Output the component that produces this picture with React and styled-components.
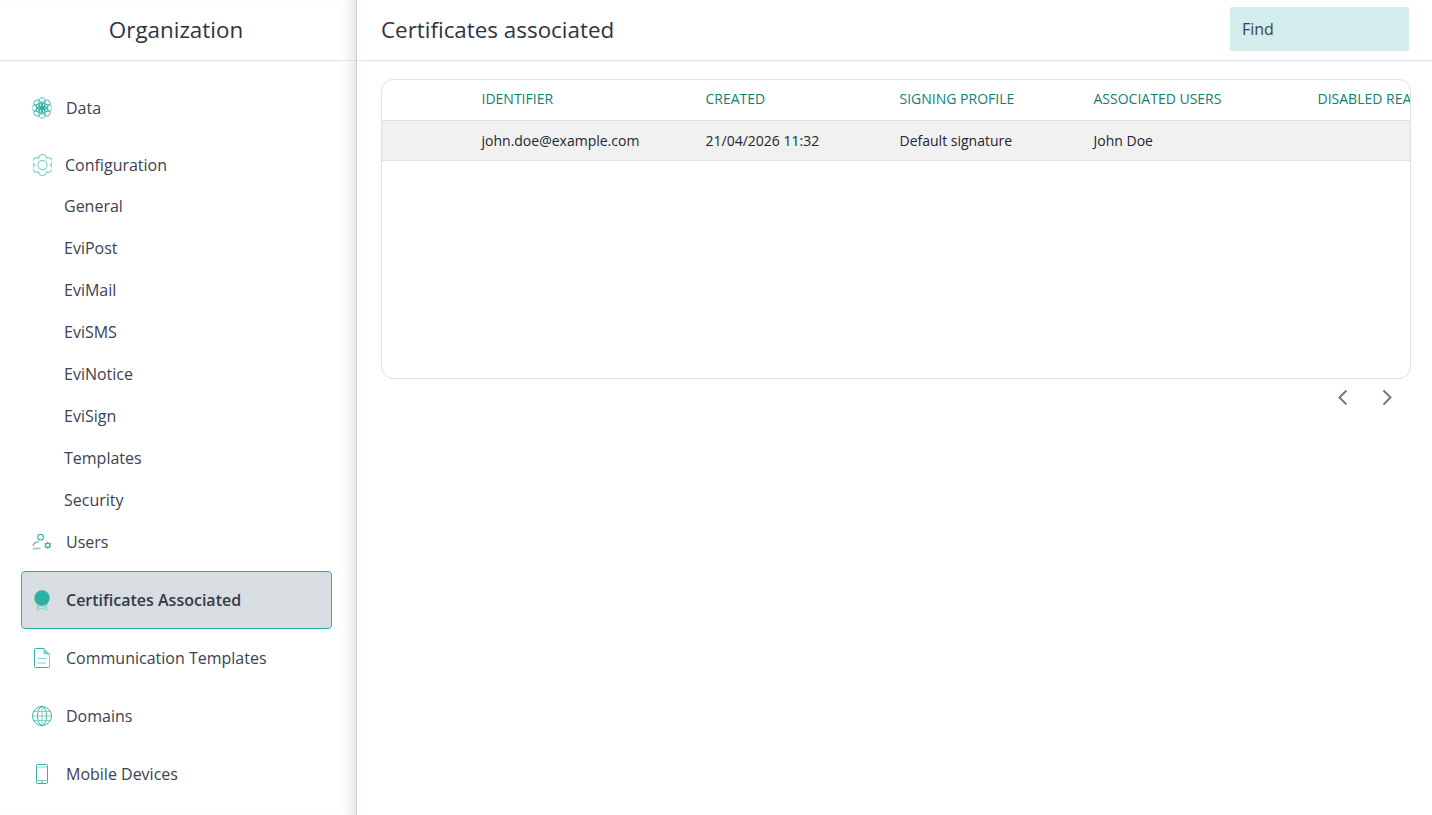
import React from 'react'
import styled, { createGlobalStyle } from 'styled-components'

const GlobalStyle = createGlobalStyle`
  html, body {
    margin: 0;
    padding: 0;
    background: #fff;
    font-family: "Open Sans", "Liberation Sans", sans-serif;
    color: #2f3342;
  }
  * { box-sizing: border-box; }
`

const Page = styled.div`
  display: flex;
  height: 100vh;
  overflow: hidden;
`

const Sidebar = styled.aside`
  flex: 0 0 357px;
  border-right: 1px solid #c5d0d6;
  box-shadow: inset -12px 0 12px -8px rgba(190, 198, 202, 0.5);
`

const SideHeader = styled.div`
  height: 61px;
  border-bottom: 1px solid #dce1e5;
  display: flex;
  align-items: center;
  justify-content: center;
  font-size: 22.4px;
  line-height: 30px;
  color: #2f3342;
  padding: 0 4px 1px 0;
`

const Nav = styled.nav`
  padding: 18px 24px 0 21px;
  display: flex;
  flex-direction: column;
`

const NavItem = styled.div`
  display: flex;
  align-items: center;
  height: ${(p) => p.$height || 58}px;
  margin-top: ${(p) => p.$gapAbove || 0}px;
  padding-top: ${(p) => p.$top || 0}px;
  padding-left: 10px;
  gap: ${(p) => p.$gap || 14}px;
  font-size: 16px;
  color: #3c4250;
  border: 1px solid transparent;
  border-radius: 4px;

  ${(p) =>
    p.$active &&
    `
    background: #d8dde1;
    border-color: #2fb0a5;
    font-weight: 600;
    color: #353a47;
  `}
`

const IconSlot = styled.span`
  flex: none;
  width: 20px;
  display: flex;
  justify-content: center;
  align-items: center;
`

const SubItem = styled.div`
  height: 42px;
  line-height: 42px;
  padding-left: 43px;
  font-size: 16px;
  color: #3c4250;
`

const Main = styled.main`
  flex: 1;
  min-width: 0;
`

const TopBar = styled.header`
  height: 61px;
  border-bottom: 1px solid #dce1e5;
  display: flex;
  align-items: center;
  justify-content: space-between;
  padding: 0 23px 0 24px;
`

const Title = styled.h1`
  margin: -1px 0 0;
  font-size: 22.4px;
  font-weight: 400;
  line-height: 30px;
  color: #2f3342;
`

const FindBox = styled.div`
  width: 179px;
  height: 44px;
  margin-top: -3px;
  padding-left: 12px;
  display: flex;
  align-items: center;
  background: #d2edeb;
  border-radius: 2px;
  font-size: 16px;
  color: #3c4250;
`

const Content = styled.div`
  padding: 18px 21px 0 24px;
`

const TableCard = styled.div`
  height: 300px;
  border: 1px solid #dce1e5;
  border-radius: 12px;
  overflow: hidden;
`

const Row = styled.div`
  display: grid;
  grid-template-columns: 99.5px 224px 194px 194px 224px 200px;
  align-items: center;
  height: ${(p) => p.$height}px;
  border-bottom: 1px solid #dce1e5;
  background: ${(p) => p.$bg || 'transparent'};
  white-space: nowrap;
`

const HeadCell = styled.div`
  font-size: 14px;
  color: #0f7f73;
  text-transform: uppercase;
  margin-top: -4px;
`

const Cell = styled.div`
  font-size: 14px;
  color: #23262e;
`

const Pager = styled.div`
  display: flex;
  justify-content: flex-end;
  gap: 24px;
  padding: 8px 14px 0 0;
`

const PageButton = styled.button`
  width: 20px;
  height: 20px;
  padding: 0;
  border: 0;
  background: none;
  display: flex;
  align-items: center;
  justify-content: center;
  color: #77797b;
`

const teal = '#35b1a6'
const lightTeal = '#7fd0c8'

const DataIcon = () => (
  <svg width="20" height="22" viewBox="0 0 20 22" fill="none" stroke={teal} strokeWidth="0.85">
    {[0, 45, 90, 135, 180, 225, 270, 315].map((a) => (
      <ellipse key={a} cx="10" cy="5.2" rx="3.4" ry="4.4" transform={`rotate(${a} 10 11)`} />
    ))}
    {[0, 60, 120, 180, 240, 300].map((a) => (
      <circle key={a} cx="10" cy="8" r="3" transform={`rotate(${a} 10 11)`} />
    ))}
  </svg>
)

// six rounded lobes with a dip between them, lobe pointing up
const gearPath = (() => {
  const pt = (deg, r) => {
    const t = ((deg - 90) * Math.PI) / 180
    return `${(9.5 + r * Math.cos(t)).toFixed(2)} ${(11 + r * Math.sin(t)).toFixed(2)}`
  }
  let d = `M${pt(-30, 7.8)}`
  for (let a = 0; a < 360; a += 60) {
    d += ` C${pt(a - 24, 9.6)} ${pt(a - 16, 10.6)} ${pt(a, 10.7)}`
    d += ` C${pt(a + 16, 10.6)} ${pt(a + 24, 9.6)} ${pt(a + 30, 7.8)}`
  }
  return d + 'Z'
})()

const GearIcon = () => (
  <svg width="19" height="22" viewBox="0 0 19 22" fill="none" stroke={lightTeal} strokeWidth="1.1">
    <path d={gearPath} />
    <circle cx="9.5" cy="11" r="4.6" />
  </svg>
)

const UsersIcon = () => (
  <svg width="21" height="18" viewBox="0 0 21 18" fill="none" stroke={teal} strokeWidth="1.1">
    <circle cx="9" cy="4" r="3" />
    <path d="M1 13c.5-2.7 3-3.800 6-4.200" />
    <path d="M1 16.200l8-.7" stroke={lightTeal} strokeWidth="1.600" />
    <circle cx="16.500" cy="12.500" r="2.300" strokeWidth="1.300" />
    <path
      d="M16.500 8.800v1.500M16.500 14.700v1.500M13.300 10.600l1.300.8M18.400 13.600l1.300.8M13.300 14.400l1.300-.8M18.400 11.400l1.300-.8"
      strokeWidth="1.300"
    />
  </svg>
)

const CertIcon = () => (
  <svg width="16" height="21" viewBox="0 0 16 21" fill="none">
    <path d="M3.500 12v8l4.500-2 4.500 2v-8" stroke={lightTeal} strokeWidth="1" />
    <path d="M3.500 17.500l4.500-2 4.500 2" stroke={lightTeal} strokeWidth="1" />
    <circle cx="8" cy="8" r="7.700" fill="#2fb0a5" />
  </svg>
)

const DocIcon = () => (
  <svg width="16" height="20" viewBox="0 0 16 20" fill="none" stroke={teal} strokeWidth="1">
    <path d="M10 .5H1.500a1 1 0 0 0-1 1v17a1 1 0 0 0 1 1h13a1 1 0 0 0 1-1" />
    <path d="M10 .5L15.500 6H10z" fill={lightTeal} stroke={lightTeal} />
    <path d="M15.500 6v13" stroke={lightTeal} />
    <path d="M3.500 10.500h8.500M3.500 15h8.500" stroke={lightTeal} />
  </svg>
)

const GlobeIcon = () => (
  <svg width="20" height="20" viewBox="0 0 20 20" fill="none" stroke={teal} strokeWidth="1">
    <circle cx="10" cy="10" r="9.500" />
    <ellipse cx="10" cy="10" rx="4.500" ry="9.500" />
    <path d="M10 .5v19M.5 10h19M2 5.500h16M2 14.500h16" stroke={lightTeal} />
  </svg>
)

const PhoneIcon = () => (
  <svg width="12" height="20" viewBox="0 0 12 20" fill="none" stroke={teal} strokeWidth="1">
    <rect x=".5" y=".5" width="11" height="19" rx="1" />
    <path d="M.5 3h11M.5 16.500h11" stroke={lightTeal} />
    <path d="M5 18h2" />
  </svg>
)

const Chevron = ({ points }) => (
  <svg width="12" height="16" viewBox="0 0 12 16" fill="none" stroke="currentColor" strokeWidth="2">
    <polyline points={points} />
  </svg>
)

const subItems = ['General', 'EviPost', 'EviMail', 'EviSMS', 'EviNotice', 'EviSign', 'Templates', 'Security']

const columns = ['Identifier', 'Created', 'Signing profile', 'Associated users', 'Disabled reason']

const rows = [['john.doe@example.com', '21/04/2026 11:32', 'Default signature', 'John Doe', '']]

const App = () => (
  <Page>
    <GlobalStyle />
    <Sidebar>
      <SideHeader>Organization</SideHeader>
      <Nav>
        <NavItem>
          <IconSlot><DataIcon /></IconSlot>
          Data
        </NavItem>
        <NavItem $height={48} $top={8} $gap={13}>
          <IconSlot><GearIcon /></IconSlot>
          Configuration
        </NavItem>
        {subItems.map((item) => (
          <SubItem key={item}>{item}</SubItem>
        ))}
        <NavItem $height={42}>
          <IconSlot><UsersIcon /></IconSlot>
          Users
        </NavItem>
        <NavItem $active $gapAbove={8}>
          <IconSlot><CertIcon /></IconSlot>
          Certificates Associated
        </NavItem>
        <NavItem>
          <IconSlot><DocIcon /></IconSlot>
          Communication Templates
        </NavItem>
        <NavItem>
          <IconSlot><GlobeIcon /></IconSlot>
          Domains
        </NavItem>
        <NavItem>
          <IconSlot><PhoneIcon /></IconSlot>
          Mobile Devices
        </NavItem>
      </Nav>
    </Sidebar>
    <Main>
      <TopBar>
        <Title>Certificates associated</Title>
        <FindBox>Find</FindBox>
      </TopBar>
      <Content>
        <TableCard>
          <Row $height={41}>
            <span />
            {columns.map((col) => (
              <HeadCell key={col}>{col}</HeadCell>
            ))}
          </Row>
          {rows.map((row) => (
            <Row key={row[0]} $height={40} $bg="#f1f1f1">
              <span />
              {row.map((value, i) => (
                <Cell key={i}>{value}</Cell>
              ))}
            </Row>
          ))}
        </TableCard>
        <Pager>
          <PageButton>
            <Chevron points="9.5,1.5 2.5,8.500 9.5,15.500" />
          </PageButton>
          <PageButton>
            <Chevron points="2.5,1.5 9.5,8.500 2.5,15.500" />
          </PageButton>
        </Pager>
      </Content>
    </Main>
  </Page>
)

export default App
